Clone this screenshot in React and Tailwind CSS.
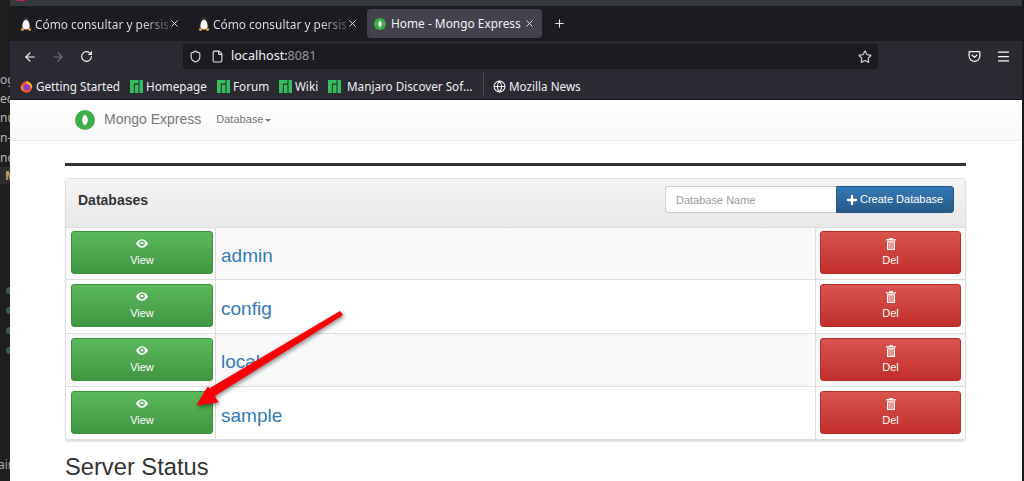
import { ArrowLeft, ArrowRight, RotateCw, X, Plus, Shield, File, Star, Menu, Globe } from "lucide-react";

const Tux = () => (
  <svg viewBox="0 0 12 14" className="w-[12px] h-[14px] shrink-0">
    <path d="M6 .3C3.400.3 2.700 2.400 2.500 4 2.300 5.800 1.200 7.600 1.200 9.800c0 2 1.900 3.300 4.800 3.300s4.800-1.300 4.800-3.300C10.800 7.600 9.700 5.800 9.500 4 9.300 2.400 8.600.3 6 .3z" fill="#2c2c2c" />
    <path d="M6 2.800c-2 0-3.600 3.200-3.600 6.400 0 2.300 1.600 3.200 3.600 3.200s3.600-.9 3.600-3.200C9.600 6 8 2.800 6 2.800z" fill="#f6f6f6" />
    <path d="M.6 11.600l3-.5.5 2.300-2.300.5zM11.400 11.600l-3-.5-.5 2.300 2.300.5zM5 2.600h2l-1 1.200z" fill="#e6a23c" />
  </svg>
);

const Leaf = ({ size }) => (
  <svg viewBox="0 0 20 20" className={size}>
    <circle cx="10" cy="10" r="10" fill="#3fae49" />
    <path d="M10 4.500c2 1.800 2.800 3.700 2.800 5.500S12 13.700 10 15.500C8 13.700 7.200 11.800 7.200 10S8 6.300 10 4.500z" fill="#fff" />
  </svg>
);

const Manjaro = () => (
  <svg viewBox="0 0 13 13" className="w-[13px] h-[13px] shrink-0">
    <path d="M0 0h8.500v3.500H3.800V13H0zM4.800 4.700h3.700V13H4.800zM9.500 0H13v13H9.500z" fill="#35bf5c" />
  </svg>
);

const Firefox = () => (
  <svg viewBox="0 0 14 14" className="w-[13px] h-[13px] shrink-0">
    <circle cx="7" cy="7.500" r="6.200" fill="#f0522f" />
    <path d="M7 .6c1 1.400 3 1.600 4.500 3.200 1.500 1.700 1.700 3.800 1 5.500-.8-2.800-2.700-4.500-5.500-5.200z" fill="#ffb02e" />
    <path d="M.8 7.500c.2 1.500 1 4 3.200 5.200C2.500 10.500 2.300 8 3.500 6z" fill="#ff9a2e" />
    <circle cx="7.200" cy="7.700" r="3.200" fill="#7b3fd6" />
  </svg>
);

const Pocket = () => (
  <svg viewBox="0 0 14 14" className="w-[13px] h-[13px]" fill="none" stroke="#fbfbfe" strokeWidth="1.300" strokeLinecap="round" strokeLinejoin="round">
    <path d="M2 1.700h10c.5 0 .8.300.8.800V6.500c0 3.200-2.600 5.800-5.800 5.800S1.200 9.700 1.200 6.500V2.500c0-.5.300-.8.800-.8z" />
    <path d="M4.500 5.600L7 8l2.500-2.400" />
  </svg>
);

const Eye = () => (
  <svg viewBox="0 0 14 10" className="w-[12px] h-[9px]">
    <path fillRule="evenodd" d="M7 0C3.500 0 1 2.800 0 5c1 2.200 3.500 5 7 5s6-2.800 7-5c-1-2.200-3.500-5-7-5zM7 1.500a3.300 3.300 0 0 1 3.300 3.300A3.300 3.300 0 0 1 7 8.100a3.300 3.300 0 0 1-3.300-3.300A3.300 3.300 0 0 1 7 1.500z" fill="#fff" />
    <circle cx="7" cy="4.600" r="1.600" fill="#fff" />
  </svg>
);

const Trash = () => (
  <svg viewBox="0 0 10 12" className="w-[10px] h-[12px]">
    <path fillRule="evenodd" d="M3.500 0h3l.4 1.200H10v1.200H0V1.200h3.100zM1 3.200h8V12H1zM2.400 4.200v6.800h1.100V4.200zM4.450 4.200v6.800h1.100V4.200zM6.500 4.200v6.800h1.100V4.200z" fill="#fff" />
  </svg>
);

const Tab = ({ label, width }) => (
  <div className={`flex items-center h-[29px] pl-[10px] shrink-0 ${width}`}>
    <Tux />
    <span className="ml-[3px] mt-[2px] w-[133px] overflow-hidden whitespace-nowrap text-[11.900px] bg-gradient-to-r from-[#e4e4e8] from-80% to-[#55545c] bg-clip-text text-transparent">{label}</span>
    <X size={11} className="text-[#e8e8ec] ml-[1px] shrink-0" />
  </div>
);

const Bookmark = ({ icon, label, width, gap = "gap-[3px]" }) => (
  <div className={`flex items-center shrink-0 ${gap} ${width}`}>
    {icon}
    <span className="text-[11.700px] text-[#f0f0f4] whitespace-nowrap">{label}</span>
  </div>
);

const leftLines = [
  { text: "og", cls: "h-[19px]" },
  { text: "ec", cls: "h-[19px]" },
  { text: "nu", cls: "h-[20px]" },
  { text: "n-r", cls: "h-[20px]" },
  { text: "no", cls: "h-[19px]" },
];

const rows = [
  { name: "admin", h: "h-[52px] bg-[#f9f9f9]", pt: "pt-[3px]", namePt: "pt-[14px]" },
  { name: "config", h: "h-[54px] bg-white", pt: "pt-[4px]", namePt: "pt-[15px]" },
  { name: "local", h: "h-[53px] bg-[#f9f9f9]", pt: "pt-[4px]", namePt: "pt-[14px]" },
  { name: "sample", h: "h-[54px] bg-white border-b", pt: "pt-[4px]", namePt: "pt-[15px]" },
];

const DbRow = ({ row }) => (
  <div className={`flex border-t border-[#dddddd] ${row.h}`}>
    <div className={`w-[150px] pl-[5px] border-r border-[#dddddd] ${row.pt}`}>
      <button className="w-[142px] h-[43px] flex flex-col items-center pt-[7px] rounded-[3px] border border-[#3e8f3e] bg-gradient-to-b from-[#5cb85c] to-[#419641] text-white text-[11px] leading-[14px]">
        <Eye />
        <span className="mt-[5px]">View</span>
      </button>
    </div>
    <div className={`flex-1 pl-[5px] border-r border-[#dddddd] text-[19px] leading-[28px] text-[#337ab7] ${row.namePt}`}>{row.name}</div>
    <div className={`w-[149px] pl-[4px] ${row.pt}`}>
      <button className="w-[141px] h-[43px] flex flex-col items-center pt-[6px] rounded-[3px] border border-[#b92c28] bg-gradient-to-b from-[#d9534f] to-[#c12e2a] text-white text-[11px] leading-[14px]">
        <Trash />
        <span className="mt-[3px]">Del</span>
      </button>
    </div>
  </div>
);

export default function App() {
  return (
    <div className="relative flex w-[1024px] h-[481px] overflow-hidden bg-[#1e1e1e] font-['Noto_Sans',sans-serif]">
      {/* editor peeking out on the left */}
      <div className="w-[10px] shrink-0 flex flex-col overflow-hidden text-[12px] text-[#b8b8b8] whitespace-nowrap pt-[70px]">
        {leftLines.map((l) => (
          <div key={l.text} className={`leading-[19px] ${l.cls}`}>{l.text}</div>
        ))}
        <div className="h-[17px] bg-[#2d2d2d] text-[#c9a26a] font-bold leading-[17px] pl-[5px]">M</div>
        <div className="flex flex-col gap-[13px] mt-[103px] pl-[6px]">
          <div className="w-[7px] h-[7px] rounded-full bg-[#3f5f52]" />
          <div className="w-[7px] h-[7px] rounded-full bg-[#3f5f52]" />
          <div className="w-[7px] h-[7px] rounded-full bg-[#3f5f52]" />
          <div className="w-[7px] h-[7px] rounded-full bg-[#3f5f52]" />
        </div>
        <div className="mt-[104px] leading-[14px] text-[#a8a8a8] -ml-[2px]">ain</div>
      </div>

      <div className="w-[1012px] shrink-0 flex flex-col">
        <div className="h-[6px] bg-[#343a3c]">
          <div className="ml-[7px] w-[8px] h-[1px] bg-[#d81b60]" />
        </div>

        {/* tabs */}
        <div className="h-[35px] bg-[#1c1b22] flex items-start pt-[3px]">
          <Tab label="Cómo consultar y persis" width="w-[178px]" />
          <Tab label="Cómo consultar y persis" width="w-[179px]" />
          <div className="flex items-center w-[175px] h-[29px] pl-[7px] rounded-[4px] bg-[#42414d] shrink-0">
            <Leaf size="w-[12px] h-[12px]" />
            <span className="ml-[5px] mt-[1px] w-[133px] whitespace-nowrap text-[11.900px] text-[#f4f4f6]">Home - Mongo Express</span>
            <X size={11} className="text-[#e8e8ec]" />
          </div>
          <Plus size={13} className="text-[#e8e8ec] ml-[11px] mt-[8px]" />
        </div>

        {/* nav bar */}
        <div className="h-[28px] bg-[#2b2a33] flex items-end">
          <div className="w-[173px] h-[25px] flex items-center pl-[13px] shrink-0">
            <ArrowLeft size={14} className="text-[#fbfbfe]" />
            <ArrowRight size={14} className="text-[#77767e] ml-[14px]" />
            <RotateCw size={13} className="text-[#fbfbfe] ml-[15px]" />
          </div>
          <div className="w-[695px] h-[25px] bg-[#1c1b22] rounded-[3px] flex items-center pl-[6px] pr-[6px] shrink-0">
            <Shield size={13} className="text-[#e4e4e8]" />
            <File size={13} className="text-[#e4e4e8] ml-[9px]" />
            <span className="ml-[7px] text-[12.600px] text-[#f4f4f6]">localhost:<span className="text-[#96959c]">8081</span></span>
            <Star size={14} className="text-[#d8d8dc] ml-auto" />
          </div>
          <div className="flex-1 h-[25px] flex items-center pl-[90px]">
            <Pocket />
            <Menu size={15} className="text-[#fbfbfe] ml-[15px]" />
          </div>
        </div>

        {/* bookmarks */}
        <div className="h-[31px] bg-[#2b2a33] border-b border-[#16151a] flex items-center pl-[10px] pt-[5px]">
          <Bookmark icon={<Firefox />} label="Getting Started" width="w-[110px]" />
          <Bookmark icon={<Manjaro />} label="Homepage" width="w-[87px]" />
          <Bookmark icon={<Manjaro />} label="Forum" width="w-[62px]" />
          <Bookmark icon={<Manjaro />} label="Wiki" width="w-[49px]" />
          <Bookmark icon={<Manjaro />} label="Manjaro Discover Sof..." width="w-[155px]" gap="gap-[6px]" />
          <div className="w-px h-[22px] -mt-[5px] bg-[#4a4952] shrink-0" />
          <div className="ml-[9px]">
            <Bookmark icon={<Globe size={13} className="text-[#f0f0f4] shrink-0" />} label="Mozilla News" width="w-[90px]" />
          </div>
        </div>

        {/* page */}
        <div className="flex-1 bg-white font-['Liberation_Sans',sans-serif] overflow-hidden">
          <div className="h-[41px] bg-gradient-to-b from-white to-[#f8f8f8] border-b border-[#ececec] flex items-center pl-[65px] pb-[1px]">
            <Leaf size="w-[20px] h-[20px]" />
            <span className="ml-[9px] text-[14px] text-[#777777]">Mongo Express</span>
            <span className="ml-[15px] text-[11px] text-[#777777]">Database</span>
            <span className="ml-[2px] mt-[1px] w-0 h-0 border-x-[3px] border-x-transparent border-t-[3px] border-t-[#777777]" />
          </div>

          <div className="pl-[55px] w-[956px]">
            <div className="mt-[22px] h-[3px] bg-[#333333]" />

            <div className="mt-[12px] border border-[#dddddd] rounded-[3px] shadow-[0_1px_2px_rgba(0,0,0,0.1)]">
              <div className="h-[48px] bg-gradient-to-b from-[#f5f5f5] to-[#e8e8e8] flex items-start pl-[12px] pr-[11px] pt-[7px]">
                <span className="mt-[6px] text-[14px] leading-[16px] font-bold text-[#333333]">Databases</span>
                <div className="ml-auto flex">
                  <input
                    readOnly
                    placeholder="Database Name"
                    className="w-[171px] h-[27px] px-[10px] bg-white border border-[#cccccc] border-r-0 rounded-l-[3px] text-[11px] placeholder:text-[#999999] outline-none"
                  />
                  <button className="w-[118px] h-[27px] flex items-center pl-[8px] rounded-r-[3px] bg-gradient-to-b from-[#337ab7] to-[#265a88] border border-[#245580] text-white text-[11px]">
                    <Plus size={14} strokeWidth={4} className="mr-[1px]" />
                    Create Database
                  </button>
                </div>
              </div>
              {rows.map((row) => (
                <DbRow key={row.name} row={row} />
              ))}
            </div>

            <h2 className="mt-[13px] text-[23.700px] leading-[26px] text-[#333333]">Server Status</h2>
          </div>
        </div>
      </div>

      <div className="w-[2px] shrink-0 bg-[#1a1a1a]" />

      {/* annotation arrow drawn over the page */}
      <svg viewBox="0 0 1024 481" className="absolute inset-0 w-[1024px] h-[481px] pointer-events-none drop-shadow-[1px_2px_2px_rgba(0,0,0,0.45)]">
        <path d="M340 311.500L342.500 315 214 396 204 392z" fill="#fb0007" stroke="#fb0007" strokeLinejoin="round" />
        <path d="M197 405L208 387 218 402z" fill="#fb0007" stroke="#fb0007" strokeLinejoin="round" />
      </svg>
    </div>
  );
}
